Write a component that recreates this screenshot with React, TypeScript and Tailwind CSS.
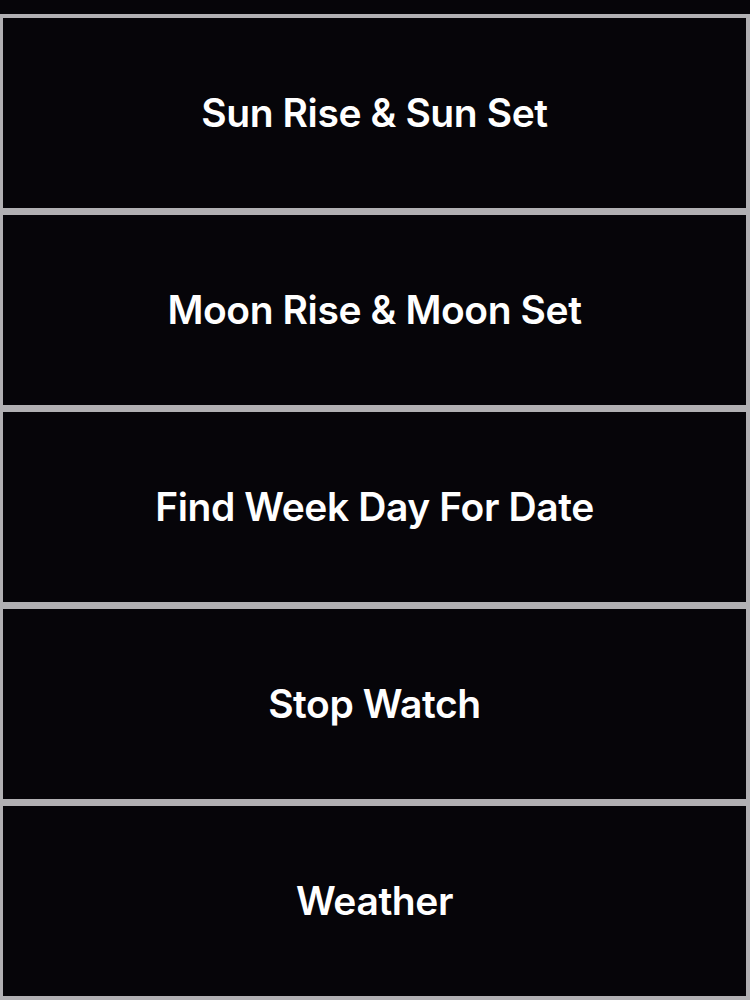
import React from 'react';

const items = [
  'Sun Rise & Sun Set',
  'Moon Rise & Moon Set',
  'Find Week Day For Date',
  'Stop Watch',
  'Weather',
];

const App: React.FC = () => {
  return (
    <div className="w-[750px] h-[1000px] bg-[#060509] flex flex-col pt-[14px] font-['Inter','Liberation_Sans',sans-serif]">
      {/* список пунктов меню */}
      <div className="flex-1 bg-[#b1b0b3] flex flex-col gap-[7px] pt-[4px] pb-[4px] pl-[3px] pr-[4px]">
        {items.map(label => (
          <button
            key={label}
            className="h-[190px] bg-[#060509] flex items-center justify-center text-white text-[39px] font-semibold tracking-[-0.4px]"
          >
            {label}
          </button>
        ))}
      </div>
    </div>
  );
};

export default App;
